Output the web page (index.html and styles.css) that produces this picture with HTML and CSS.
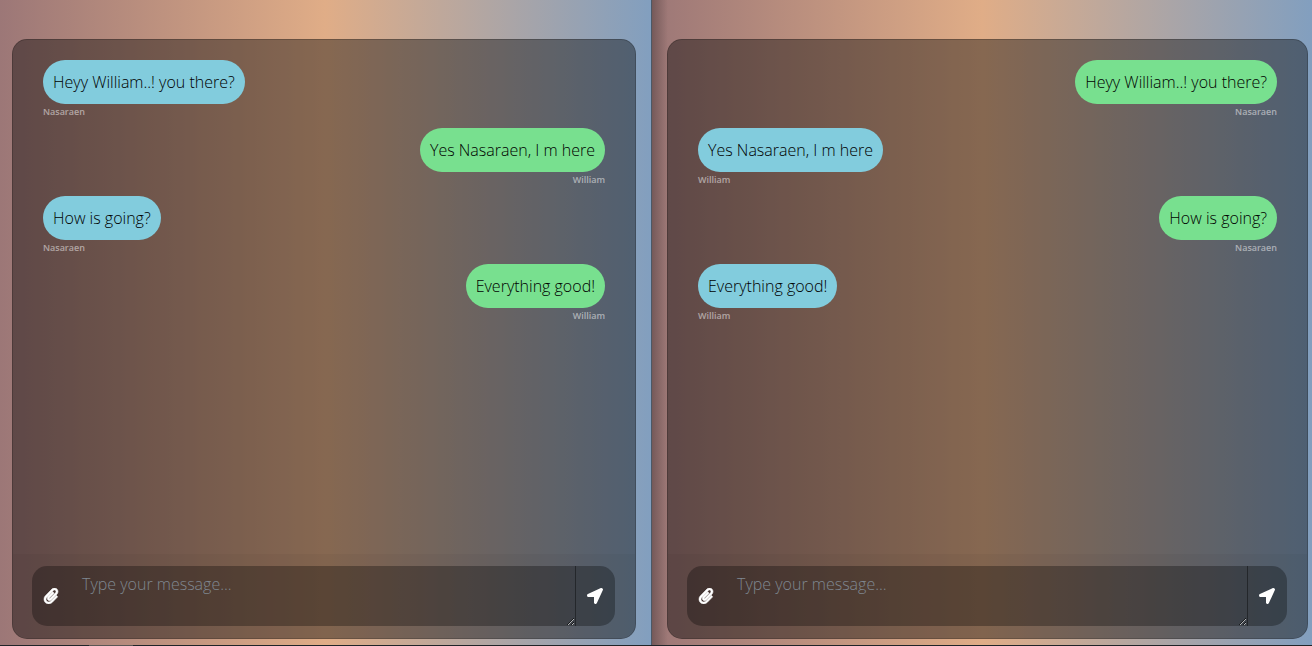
FILE: index.html
```html
<!DOCTYPE html>
<html lang="en">
<head>
<meta charset="utf-8">
<title>Chat</title>
<link rel="stylesheet" href="styles.css">
</head>
<body>
<svg class="sprite" aria-hidden="true">
  <symbol id="clip" viewBox="0 0 448 512"><path fill="currentColor" stroke="currentColor" stroke-width="18" d="M43.246 466.142c-58.43-60.289-57.341-157.511 1.386-217.581L254.392 34c44.316-45.332 116.351-45.336 160.671 0 43.89 44.894 43.943 117.329 0 162.276L232.214 383.128c-29.855 30.537-78.633 30.111-107.982-.998-28.275-29.97-27.368-77.473 1.452-106.953l143.743-146.835c6.182-6.314 16.312-6.422 22.626-.241l22.861 22.379c6.315 6.182 6.422 16.312.241 22.626L171.427 319.927c-4.932 5.045-5.236 13.428-.648 18.292 4.372 4.634 11.245 4.711 15.688.165l182.849-186.851c19.613-20.062 19.613-52.725-.011-72.798-19.189-19.627-49.957-19.637-69.154 0L90.39 293.295c-34.763 35.56-35.299 93.12-1.191 128.313 34.01 35.093 88.985 35.137 123.058.286l172.06-175.999c6.177-6.319 16.307-6.433 22.626-.256l22.877 22.364c6.319 6.177 6.434 16.307.256 22.626l-172.06 175.998c-59.576 60.938-155.943 60.216-214.77-.485z"/></symbol>
  <symbol id="send" viewBox="0 0 512 512"><path fill="currentColor" d="M444.52 3.52L28.74 195.42c-47.97 22.39-31.98 92.75 19.19 92.75h175.91v175.91c0 51.17 70.36 67.17 92.75 19.19l191.9-415.78c15.99-38.39-25.59-79.97-63.97-63.97z"/></symbol>
</svg>
<main class="windows">
  <section class="pane" aria-label="William's chat">
    <div class="card">
      <div class="messages">
        <div class="message"><p class="bubble">Heyy William..! you there?</p><span class="sender">Nasaraen</span></div>
        <div class="message sent"><p class="bubble">Yes Nasaraen, I m here</p><span class="sender">William</span></div>
        <div class="message"><p class="bubble">How is going?</p><span class="sender">Nasaraen</span></div>
        <div class="message sent"><p class="bubble">Everything good!</p><span class="sender">William</span></div>
      </div>
      <form class="footer">
        <div class="composer">
          <button class="tool attach" type="button" aria-label="Attach file"><svg class="icon" aria-hidden="true"><use href="#clip"/></svg></button>
          <textarea class="field" aria-label="Message" placeholder="Type your message..."></textarea>
          <button class="tool send" type="button" aria-label="Send"><svg class="icon" aria-hidden="true"><use href="#send"/></svg></button>
        </div>
      </form>
    </div>
  </section>
  <section class="pane second" aria-label="Nasaraen's chat">
    <div class="card">
      <div class="messages">
        <div class="message sent"><p class="bubble">Heyy William..! you there?</p><span class="sender">Nasaraen</span></div>
        <div class="message"><p class="bubble">Yes Nasaraen, I m here</p><span class="sender">William</span></div>
        <div class="message sent"><p class="bubble">How is going?</p><span class="sender">Nasaraen</span></div>
        <div class="message"><p class="bubble">Everything good!</p><span class="sender">William</span></div>
      </div>
      <form class="footer">
        <div class="composer">
          <button class="tool attach" type="button" aria-label="Attach file"><svg class="icon" aria-hidden="true"><use href="#clip"/></svg></button>
          <textarea class="field" aria-label="Message" placeholder="Type your message..."></textarea>
          <button class="tool send" type="button" aria-label="Send"><svg class="icon" aria-hidden="true"><use href="#send"/></svg></button>
        </div>
      </form>
    </div>
  </section>
</main>
</body>
</html>
```
FILE: styles.css
```css
* {
  box-sizing: border-box;
}

body {
  margin: 0;
  font-family: "Segoe UI", "Open Sans", "Noto Sans", sans-serif;
  font-size: 16px;
  font-weight: 300;
  line-height: 24px;
  color: #000;
}

.sprite {
  display: none;
}

.windows {
  display: grid;
  grid-template-columns: 652fr 660fr;
  min-height: 100vh;
  padding-bottom: 1px;
  background: linear-gradient(to right, #202428 89px, #5a5654 89px, #5a5654 133px, #202428 133px);
}

.pane {
  display: flex;
  padding: 39px 15px 6px 12px;
  border-right: 1px solid #4c5866;
  background: linear-gradient(to right, #9c7777, #e0ad87 50%, #829fbf);
}

.second {
  padding: 39px 4px 6px 15px;
  border-right: 0;
  background:
    linear-gradient(to right, rgba(0, 0, 0, 0.25), transparent 16px),
    linear-gradient(to right, #9c7777, #e0ad87 50%, #829fbf);
}

.card {
  flex: 1;
  display: flex;
  flex-direction: column;
  border: 1px solid rgba(0, 0, 0, 0.2);
  border-radius: 15px;
  background: rgba(0, 0, 0, 0.4);
}

.messages {
  flex: 1;
  padding: 20px 30px;
}

.message {
  display: flex;
  flex-direction: column;
  align-items: flex-start;
  margin-bottom: 8px;
}

.sent {
  align-items: flex-end;
}

.bubble {
  margin: 0;
  padding: 10px;
  border-radius: 25px;
  background: #82ccdd;
}

.sent .bubble {
  background: #78e08f;
}

.sender {
  font-size: 9px;
  font-weight: 600;
  line-height: 16px;
  color: rgba(255, 255, 255, 0.5);
}

.footer {
  padding: 12px 20px 12px 19px;
  border-radius: 0 0 15px 15px;
  background: rgba(0, 0, 0, 0.03);
}

.composer {
  display: flex;
  height: 60px;
  border-radius: 15px;
  background: rgba(0, 0, 0, 0.3);
  overflow: hidden;
}

.tool {
  display: flex;
  align-items: center;
  justify-content: center;
  width: 40px;
  padding: 0;
  border: 0;
  background: none;
  color: #fff;
}

.attach {
  width: 38px;
}

.send {
  padding-right: 2px;
  border-left: 1px solid rgba(0, 0, 0, 0.4);
}

.icon {
  width: 16px;
  height: 16px;
  overflow: visible;
}

.field {
  flex: 1;
  min-width: 0;
  padding: 6px 12px;
  border: 0;
  outline: 0;
  background: none;
  color: #fff;
  font: inherit;
  resize: both;
}

.field::placeholder {
  color: #7f8790;
}
```
